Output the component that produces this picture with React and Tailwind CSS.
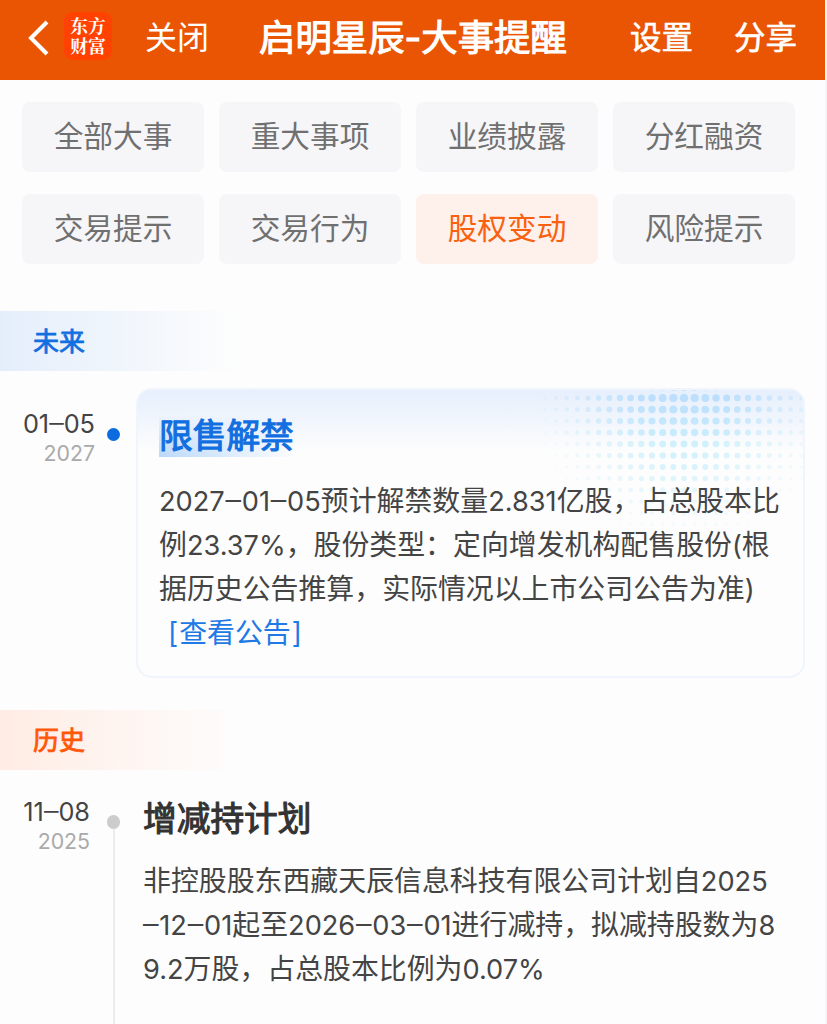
import React from 'react';

const TABS = ['全部大事', '重大事项', '业绩披露', '分红融资', '交易提示', '交易行为', '股权变动', '风险提示'];

const FUTURE_LINES = [
  '2027–01–05预计解禁数量2.831亿股，占总股本比',
  '例23.37%，股份类型：定向增发机构配售股份(根',
  '据历史公告推算，实际情况以上市公司公告为准)',
];

const HISTORY_LINES = [
  '非控股股东西藏天辰信息科技有限公司计划自2025',
  '–12–01起至2026–03–01进行减持，拟减持股数为8',
  '9.2万股，占总股本比例为0.07%',
];

const DOT_COLORS = ['#aed9fd', '#b0dbfd', '#b4dffc', '#b9e3fc', '#bde8fc', '#c3edfb'];

// Latin runs are set slightly smaller than the Chinese text around them, with wider dashes
function Line({ text }) {
  return (
    <div className="h-[43.9px] whitespace-nowrap">
      {text.split(/(–|[0-9.%()]+)/).map((part, i) => {
        if (part === '–') {
          return (
            <span key={i} className="mx-[0.8px] text-[31px] leading-none font-light first:ml-0">
              –
            </span>
          );
        }
        return i % 2 ? (
          <span key={i} className="text-[27.2px]">
            {part}
          </span>
        ) : (
          part
        );
      })}
    </div>
  );
}

function Halftone() {
  const dots = [];
  for (let row = 0; row < 14; row++) {
    for (let col = -13; col <= 11; col++) {
      const dist = Math.hypot(col / 14.5, Math.max(row - 1, 0) / 13);
      if (dist >= 1) continue;
      dots.push(
        <circle
          key={`${row}-${col}`}
          cx={148 + col * 10.67}
          cy={-3.5 + row * 11.5}
          r={1.5 + 2.8 * (1 - dist)}
          fill={DOT_COLORS[Math.min(row, 5)]}
          opacity={Math.min(0.8, 1.15 * (1 - dist))}
        />
      );
    }
  }
  return (
    <svg className="absolute top-0 right-0" width="267" height="160" viewBox="0 0 267 160">
      {dots}
    </svg>
  );
}

function SectionLabel({ children, className }) {
  return (
    <div
      className={`w-[242px] h-15 pl-[33px] text-[26px] leading-[61px] [-webkit-text-stroke:0.8px] bg-linear-to-r ${className}`}
    >
      {children}
    </div>
  );
}

export default function App() {
  return (
    <div className="w-[827px] h-[1024px] overflow-hidden bg-[#fdfdfd] border-r-2 border-[#f5f5f7] font-['Inter','Noto_Sans_CJK_SC',sans-serif] text-[#444]">
      <header className="h-20 flex items-center bg-[#ea5504] text-white whitespace-nowrap pb-1">
        <svg className="ml-[27px] w-6 h-9 shrink-0" viewBox="0 0 24 36" fill="none" stroke="currentColor" strokeWidth="4">
          <path d="M20 2 4 18l16 16" />
        </svg>
        <div className="ml-[13px] mb-1 w-12 h-12 shrink-0 rounded-[9px] bg-[#ff4200] grid grid-rows-[20px_20px] content-center justify-center font-['Noto_Serif_CJK_SC','Noto_Sans_CJK_SC',serif] font-bold text-[17.8px] leading-[20px]">
          <span className="h-5">东方</span>
          <span className="h-5">财富</span>
        </div>
        <span className="ml-[33px] w-[64px] text-[32px]">关闭</span>
        <h1 className="ml-[50px] w-[309px] text-[36.4px] [-webkit-text-stroke:1.1px]">启明星辰-大事提醒</h1>
        <span className="ml-[62px] w-16 text-[31.5px] [-webkit-text-stroke:0.6px]">设置</span>
        <span className="ml-[40px] w-16 text-[31.5px] [-webkit-text-stroke:0.6px]">分享</span>
      </header>

      <div className="pt-[22px] pl-[22px] grid grid-cols-[repeat(4,182px)] gap-x-[15px] gap-y-[22px]">
        {TABS.map((tab) => (
          <button
            key={tab}
            className={`h-[70px] rounded-lg text-[29.7px] leading-none ${
              tab === '股权变动' ? 'bg-[#fef0ea] text-[#f9600f]' : 'bg-[#f6f6f9] text-[#707070]'
            }`}
          >
            {tab}
          </button>
        ))}
      </div>

      <SectionLabel className="mt-[47px] from-[#e4eefb] to-[#fdfdfd] text-[#116fe0]">未来</SectionLabel>

      <section className="mt-[17px] flex">
        <div className="w-[95px] pt-[20px] text-right whitespace-nowrap">
          <div className="text-[25.3px] leading-[30px]">
            01<span className="text-[29px] leading-none font-light">–</span>05
          </div>
          <div className="text-[21.3px] leading-[28px] text-[#aaa]">2027</div>
        </div>
        <div className="ml-3 mt-10 w-[13px] h-[13px] rounded-full bg-[#0b6bdf]" />
        <div className="relative ml-4 w-[669px] h-[290px] rounded-2xl overflow-hidden border-2 border-[#eff4fd] bg-linear-to-b from-[#e6effc] to-[#fdfdfd] to-[62px] pl-[21px] pt-6">
          <Halftone />
          <h2 className="relative w-[136px] h-[43px] bg-linear-to-r from-[#b9d8fb] to-transparent text-[33.7px] leading-[43px] [-webkit-text-stroke:1.1px] text-[#116fe0] whitespace-nowrap">
            <span className="absolute inset-0 bg-linear-to-b from-[#f0f5fd] to-transparent" />
            <span className="relative">限售解禁</span>
          </h2>
          <div className="relative mt-[22px] text-[27.9px] leading-[44px]">
            {FUTURE_LINES.map((line) => (
              <Line key={line} text={line} />
            ))}
            <a className="block pl-[9px] text-[#2079e4]">
              [<span className="mx-px">查看公告</span>]
            </a>
          </div>
        </div>
      </section>

      <SectionLabel className="mt-8 from-[#ffece4] to-[#fdfdfd] text-[#ff5708]">历史</SectionLabel>

      <section className="flex">
        <div className="w-[90px] pt-[26px] text-right whitespace-nowrap">
          <div className="text-[25.3px] leading-[30px]">
            11<span className="text-[29px] leading-none font-light">–</span>08
          </div>
          <div className="text-[21.3px] leading-[28px] text-[#aaa]">2025</div>
        </div>
        <div className="ml-[17px] mt-[45px] w-[13px] flex flex-col items-center">
          <div className="w-[13px] h-[14px] rounded-full bg-[#ccc]" />
          <div className="w-0.5 h-[200px] bg-[#ececec]" />
        </div>
        <div className="ml-[23px] pt-[27px]">
          <h2 className="text-[33.7px] leading-[43px] [-webkit-text-stroke:1.1px] text-[#333]">增减持计划</h2>
          <div className="mt-[19px] text-[27.9px] leading-[44px]">
            {HISTORY_LINES.map((line) => (
              <Line key={line} text={line} />
            ))}
          </div>
        </div>
      </section>
    </div>
  );
}
